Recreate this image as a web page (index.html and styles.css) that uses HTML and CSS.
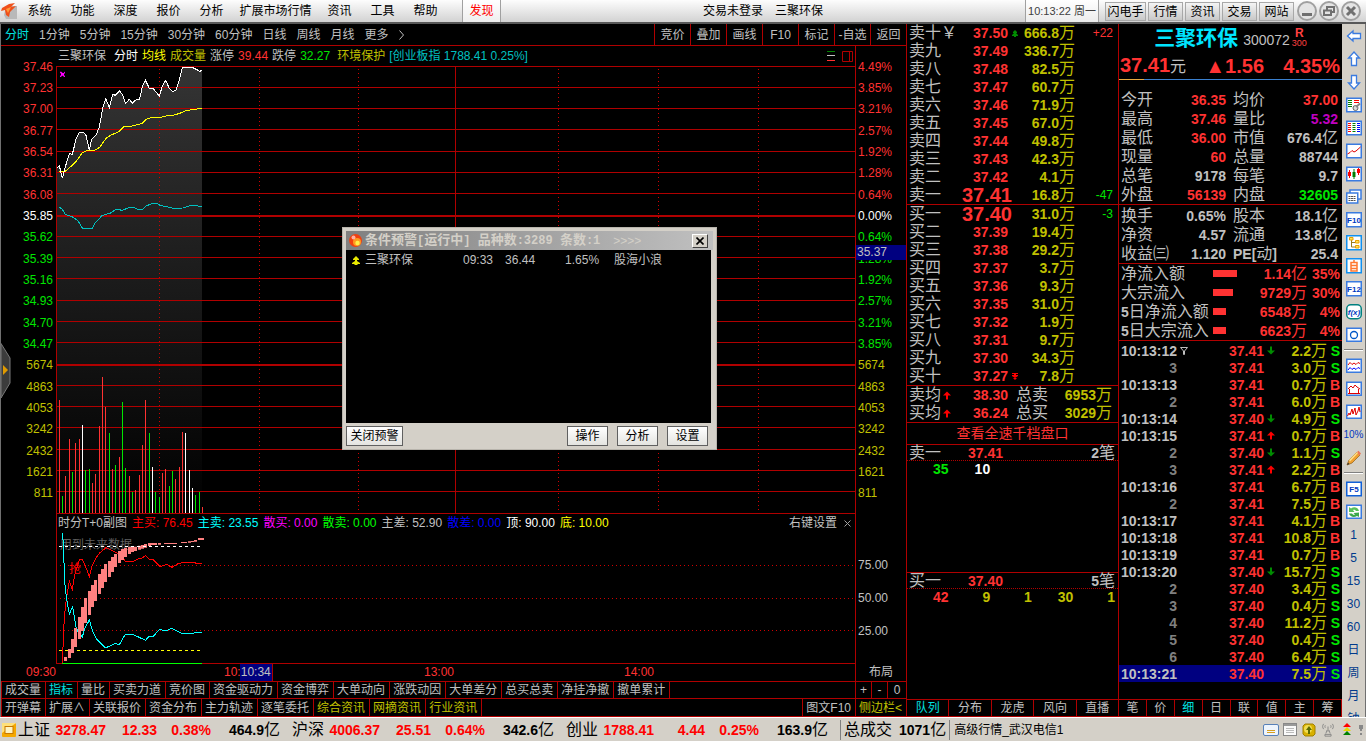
FILE: index.html
```html
<!DOCTYPE html>
<html lang="zh-CN">
<head>
<meta charset="utf-8">
<title>三聚环保 分时</title>
<link rel="stylesheet" href="styles.css">
</head>
<body>
<svg class="defs" width="0" height="0" aria-hidden="true">
  <symbol id="up" viewBox="0 0 8 8"><path d="M4 0L8 4H5V8H3V4H0Z"/></symbol>
  <symbol id="down" viewBox="0 0 8 8"><path d="M3 0H5V4H8L4 8L0 4H3Z"/></symbol>
  <symbol id="up2" viewBox="0 0 6 7"><path d="M3 0L5 2V3H1V2ZM3 2L6 5V6H4V7H2V6H0V5Z"/></symbol>
  <symbol id="down2" viewBox="0 0 6 7"><path d="M0 0H6V1H4V2H6V3L3 5L0 3V2H2V1H0ZM1 5H5L3 7Z"/></symbol>
</svg>

<header class="menubar">
  <svg class="logo" viewBox="0 0 16 16"><path d="M5 3H16V16H5L3 12Z" fill="#b9b9b9"/><path d="M1 5L8 1L14 0L10 4L15 3L9 9L8 14L5 12L4 7L0 8Z" fill="#f0501a"/><path d="M5 6L10 4L7 10Z" fill="#ff9a3c"/></svg>
  <nav class="menu">
    <button>系统</button><button>功能</button><button>深度</button><button>报价</button><button>分析</button><button class="wide">扩展市场行情</button><button>资讯</button><button>工具</button><button>帮助</button>
  </nav>
  <button class="discover">发现</button>
  <div class="title"><span>交易未登录</span><span>三聚环保</span></div>
  <div class="clock">10:13:22 周一</div>
  <div class="quick">
    <button>闪电手</button><button>行情</button><button>资讯</button><button>交易</button><button>网站</button>
  </div>
  <div class="winbtns">
    <button aria-label="最小化"><svg viewBox="0 0 20 20"><circle cx="10" cy="10" r="9"/><path class="m" d="M5 13.5H15" /></svg></button>
    <button aria-label="还原"><svg viewBox="0 0 20 20"><circle cx="10" cy="10" r="9"/><path class="n" d="M8 9V6H15V11H12M5 9.500H12V14H5Z"/></svg></button>
    <button aria-label="关闭"><svg viewBox="0 0 20 20"><circle cx="10" cy="10" r="9"/><path class="m" d="M6 6L14 14M14 6L6 14"/></svg></button>
  </div>
</header>

<main class="main">
  <section class="left">
    <div class="periods">
      <nav class="period-list">
        <button class="on">分时</button><button>1分钟</button><button>5分钟</button><button>15分钟</button><button>30分钟</button><button>60分钟</button><button>日线</button><button>周线</button><button>月线</button><button>更多</button><button aria-label="展开"><svg class="chev" viewBox="0 0 5 10"><path d="M.5 .5L4.500 5L.5 9.500"/></svg></button>
      </nav>
      <div class="tools">
        <button>竞价</button><button>叠加</button><button>画线</button><button>F10</button><button>标记</button><button>-自选</button><button>返回</button>
      </div>
    </div>

    <div class="info">
      <div class="legend">
        <span class="stock">三聚环保</span><span class="c-white">分时</span><span class="c-bright">均线</span><span class="c-yellow">成交量</span><span>涨停</span><span class="c-red">39.44</span><span>跌停</span><span class="c-green">32.27</span><span class="c-yellow sector">环境保护</span><span class="c-teal">[创业板指 1788.41 0.25%]</span>
      </div>
      <div class="chart-tools">
        <svg viewBox="0 0 8 10"><path d="M0 .5H8" stroke="#008000"/><path d="M0 4.500H8" stroke="#c0c0c0"/><path d="M0 9.500H8" stroke="#ff3232"/></svg>
        <svg class="split" viewBox="0 0 11 11"><path d="M.5 .5H10.500V10.500H.5ZM7.500 .5V10.500" stroke="#b00000"/></svg>
      </div>
      <div class="info-end"></div>
    </div>

    <div class="chart">
      <ol class="axis axis-left">
        <li>37.46</li><li>37.23</li><li>37.00</li><li>36.77</li><li>36.54</li><li>36.31</li><li>36.08</li><li class="c-white">35.85</li><li class="c-green">35.62</li><li class="c-green">35.39</li><li class="c-green">35.16</li><li class="c-green">34.93</li><li class="c-green">34.70</li><li class="c-green">34.47</li><li class="c-yellow">5674</li><li class="c-yellow">4863</li><li class="c-yellow">4053</li><li class="c-yellow">3242</li><li class="c-yellow">2432</li><li class="c-yellow">1621</li><li class="c-yellow">811</li>
      </ol>
      <svg class="plot" viewBox="168 48 2400 1344" preserveAspectRatio="none">
        <defs><linearGradient id="fade" x1="0" y1="0" x2="0" y2="1"><stop offset="0" stop-color="#343434"/><stop offset="1" stop-color="#000"/></linearGradient></defs>
        <path class="area" fill="url(#fade)" d="M170 355L178 347 187 385 194 357 208 311 217 313 228 268 238 247 250 247 258 256 268 300 275 268 288 255 298 232 308 175 317 146 328 172 338 133 346 136 359 122 368 136 377 160 388 148 397 160 406 151 419 147 427 109 436 90 448 115 460 116 478 138 487 109 497 91 508 115 518 125 528 120 538 89 547 52 577 52 600 64 606 60V1390H170Z"/>
        <path class="grid" d="M168 49.500H2568M168 112.500H2568M168 175.500H2568M168 238.500H2568M168 304.500H2568M168 367.500H2568M168 430.500H2568M168 559.500H2568M168 622.500H2568M168 685.500H2568M168 751.500H2568M168 814.500H2568M168 877.500H2568M168 1006.500H2568M168 1069.500H2568M168 1132.500H2568M168 1198.500H2568M168 1261.500H2568M168 1324.500H2568M168 1390.500H2568M169.500 48V1392M1366.500 48V1392M2566.500 48V1392"/>
        <path class="grid thick" d="M168 498H2568M168 945H2568"/>
        <path class="dots" d="M478.500 57V1389M778.500 57V1389M1075.500 57V1389M1675.500 57V1389M1975.500 57V1389M2275.500 57V1389"/>
        <path class="bar b-red" d="M178.500 1050V1389M196.500 1278V1389M208.500 1167V1389M226.500 1179V1389M238.500 1167V1389M277.500 1299V1389M286.500 1272V1389M298.500 1128V1389M307.500 981V1389M316.500 1070V1389M337.500 1257V1389M358.500 1220V1389M388.500 1278V1389M406.500 1320V1389M418.500 1275V1389M427.500 1185V1389M436.500 1050V1389M487.500 1269V1389M496.500 1257V1389M526.500 1287V1389M538.500 1250V1389M547.500 1146V1389M607.500 1371V1389"/>
        <path class="bar b-green" d="M187.500 1337V1389M217.500 1266V1389M256.500 1260V1389M268.500 1257V1389M328.500 1149V1389M346.500 1245V1389M367.500 1056V1389M376.500 1254V1389M397.500 1326V1389M448.500 1149V1389M466.500 1326V1389M478.500 1341V1389M508.500 1308V1389M517.500 1263V1389M586.500 1335V1389M598.500 1326V1389"/>
        <path class="bar b-white" d="M247.500 1125V1389M457.500 1250V1389M556.500 1149V1389M568.500 1260V1389M577.500 1314V1389"/>
        <path class="line b-teal" d="M178 471L187 478 196 493 220 502 234 512 247 534 278 534 284 520 306 497 332 489 348 478 368 481 388 472 400 472 414 478 428 478 440 467 460 460 470 460 480 466 500 470 520 475 548 474 575 466 605 469"/>
        <path class="line b-yellow" d="M178 364L196 364 208 353 218 345 228 335 247 308 262 301 284 301 300 291 318 265 332 256 358 244 372 230 392 229 425 221 440 207 456 202 482 202 497 198 520 196 548 187 556 182 605 175"/>
        <path class="line b-white" d="M170 355L178 347 187 385 194 357 208 311 217 313 228 268 238 247 250 247 258 256 268 300 275 268 288 255 298 232 308 175 317 146 328 172 338 133 346 136 359 122 368 136 377 160 388 148 397 160 406 151 419 147 427 109 436 90 448 115 460 116 478 138 487 109 497 91 508 115 518 125 528 120 538 89 547 52 577 52 600 64 606 60"/>
        <path fill="#f0f" d="M180 65H184L188 69H191L194 65H195V69L192 72V75L195 79V81H192L189 77H186L183 81H180V78L183 75V71L180 68Z"/>
      </svg>
      <ol class="axis axis-right">
        <li>4.49%</li><li>3.85%</li><li>3.21%</li><li>2.57%</li><li>1.92%</li><li>1.28%</li><li>0.64%</li><li class="c-white">0.00%</li><li class="c-green">0.64%</li><li class="c-green">1.28%</li><li class="c-green">1.92%</li><li class="c-green">2.57%</li><li class="c-green">3.21%</li><li class="c-green">3.85%</li><li class="c-yellow">5674</li><li class="c-yellow">4863</li><li class="c-yellow">4053</li><li class="c-yellow">3242</li><li class="c-yellow">2432</li><li class="c-yellow">1621</li><li class="c-yellow">811</li>
      </ol>
      <span class="cursor-price">35.37</span>
    </div>

    <div class="subhead">
      <div class="sublegend">
        <span>时分T+0副图</span><span class="s-red">主买: 76.45</span><span class="s-cyan">主卖: 23.55</span><span class="s-mag">散买: 0.00</span><span class="s-green">散卖: 0.00</span><span>主差: 52.90</span><span class="s-blue">散差: 0.00</span><span class="c-white">顶: 90.00</span><span class="c-bright">底: 10.00</span>
        <span class="rset">右键设置</span><button class="subclose" aria-label="关闭副图"><svg viewBox="0 0 7 7"><path d="M.5 .5L6.500 6.500M6.500 .5L.5 6.500"/></svg></button>
      </div>
      <div class="info-end"></div>
    </div>

    <div class="subchart">
      <div class="subleft"></div>
      <div class="subplot">
        <span class="hint">用到未来数据</span>
        <span class="grab">抢</span>
        <svg class="plot" viewBox="168 63 2400 399" preserveAspectRatio="none">
          <path class="dots" d="M180 166.500H2566M180 265.500H2566M180 361.500H2566"/>
          <path class="grid" d="M168 460.500H2568M169.500 63V462M2566.500 63V462"/>
          <path class="line s-dash b-yellow" d="M178 421.500H600"/>
          <path class="line b-red2" d="M188 460L190 370 196 290 202 250 208 213 217 238 226 185 238 150 247 148 256 168 268 199 276 168 288 144 300 128 318 113 330 119 350 129 364 138 376 154 400 154 412 148 428 143 437 136 447 147 458 147 480 170 500 163 516 172 536 160 560 157 580 157 590 160 606 160"/>
          <path class="line b-cyan" d="M187 70L190 100 194 215 199 262 208 312 218 290 228 350 236 370 247 380 256 352 268 330 278 364 290 387 316 414 334 406 346 400 358 404 375 374 400 374 437 391 446 380 460 379 478 358 496 363 516 355 545 370 580 370 590 367 606 367"/>
          <path fill="#ff8080" d="M192 441h9v12h-9zM204 417h9v27h-9zM213 387h9v42h-9zM222 354h9v57h-9zM234 321h9v66h-9zM243 291h9v72h-9zM252 264h9v75h-9zM264 243h9v72h-9zM273 225h9v66h-9zM282 210h9v63h-9zM294 192h9v60h-9zM303 177h9v57h-9zM312 162h9v54h-9zM324 153h9v48h-9zM333 141h9v45h-9zM342 132h9v39h-9zM354 123h9v36h-9zM363 117h9v33h-9zM372 114h9v27h-9zM384 111h9v21h-9zM393 110h9v16h-9zM402 110h9v13h-9zM414 107h9v12h-9zM423 105h9v11h-9zM432 102h9v11h-9zM444 99h9v9h-9zM453 99h18v6h-18zM474 99h9v5h-9zM492 99h39v3h-39zM543 96h18v3h-18zM564 94h9v4h-9zM573 93h9v3h-9zM582 90h9v5h-9zM594 84h18v6h-18z"/>
          <path class="line s-dash b-white" d="M178 109.500H600"/>
          <path class="line b-lime" d="M187 460.500H606"/>
        </svg>
      </div>
      <ol class="subaxis"><li>75.00</li><li>50.00</li><li>25.00</li></ol>
    </div>

    <div class="timeaxis">
      <span class="t-start">09:30</span>
      <div class="t-plot"><span class="t-first">10:30</span><span>13:00</span><span>14:00</span><b class="cursor-time">10:34</b></div>
      <button class="layout">布局</button>
    </div>

    <div class="tabs">
      <button>成交量</button><button class="on">指标</button><button>量比</button><button>买卖力道</button><button>竞价图</button><button>资金驱动力</button><button>资金博弈</button><button>大单动向</button><button>涨跌动因</button><button>大单差分</button><button>总买总卖</button><button>净挂净撤</button><button>撤单累计</button>
      <div class="zoomer"><button>+</button><button>-</button><button>0</button></div>
    </div>
    <div class="tabs tabs2">
      <button>开弹幕</button><button>扩展∧</button><button>关联报价</button><button>资金分布</button><button>主力轨迹</button><button>逐笔委托</button><button class="y">综合资讯</button><button class="y">网摘资讯</button><button class="y">行业资讯</button>
      <div class="tabend"><button>图文F10</button><button class="y">侧边栏&lt;</button></div>
    </div>

    <button class="flyout" aria-label="展开左侧栏"><svg viewBox="0 0 10 56"><path d="M0 .5L9 15V40L0 55Z" fill="#3c3c3c" stroke="#787878"/><path d="M2 22L7 27L2 32Z" fill="#e09a00"/></svg></button>
  </section>

  <section class="book">
    <table class="levels">
      <colgroup><col class="k1"><col class="k2"><col class="k3"><col class="k4"><col></colgroup>
      <tbody>
      <tr><th>卖十￥</th><td>37.50</td><td class="ar"><svg class="g"><use href="#up2"/></svg></td><td class="v">666.8<i>万</i></td><td class="d c-red">+22</td></tr>
      <tr><th>卖九</th><td>37.49</td><td></td><td class="v">336.7<i>万</i></td><td></td></tr>
      <tr><th>卖八</th><td>37.48</td><td></td><td class="v">82.5<i>万</i></td><td></td></tr>
      <tr><th>卖七</th><td>37.47</td><td></td><td class="v">60.7<i>万</i></td><td></td></tr>
      <tr><th>卖六</th><td>37.46</td><td></td><td class="v">71.9<i>万</i></td><td></td></tr>
      <tr><th>卖五</th><td>37.45</td><td></td><td class="v">67.0<i>万</i></td><td></td></tr>
      <tr><th>卖四</th><td>37.44</td><td></td><td class="v">49.8<i>万</i></td><td></td></tr>
      <tr><th>卖三</th><td>37.43</td><td></td><td class="v">42.3<i>万</i></td><td></td></tr>
      <tr><th>卖二</th><td>37.42</td><td></td><td class="v">4.1<i>万</i></td><td></td></tr>
      <tr><th>卖一</th><td class="big" colspan="2">37.41</td><td class="v">16.8<i>万</i></td><td class="d c-green">-47</td></tr>
      </tbody>
    </table>
    <table class="levels">
      <colgroup><col class="k1"><col class="k2"><col class="k3"><col class="k4"><col></colgroup>
      <tbody>
      <tr><th>买一</th><td class="big" colspan="2">37.40</td><td class="v">31.0<i>万</i></td><td class="d c-green">-3</td></tr>
      <tr><th>买二</th><td>37.39</td><td></td><td class="v">19.4<i>万</i></td><td></td></tr>
      <tr><th>买三</th><td>37.38</td><td></td><td class="v">29.2<i>万</i></td><td></td></tr>
      <tr><th>买四</th><td>37.37</td><td></td><td class="v">3.7<i>万</i></td><td></td></tr>
      <tr><th>买五</th><td>37.36</td><td></td><td class="v">9.3<i>万</i></td><td></td></tr>
      <tr><th>买六</th><td>37.35</td><td></td><td class="v">31.0<i>万</i></td><td></td></tr>
      <tr><th>买七</th><td>37.32</td><td></td><td class="v">1.9<i>万</i></td><td></td></tr>
      <tr><th>买八</th><td>37.31</td><td></td><td class="v">9.7<i>万</i></td><td></td></tr>
      <tr><th>买九</th><td>37.30</td><td></td><td class="v">34.3<i>万</i></td><td></td></tr>
      <tr><th>买十</th><td>37.27</td><td class="ar"><svg class="r"><use href="#down2"/></svg></td><td class="v">7.8<i>万</i></td><td></td></tr>
      </tbody>
    </table>
    <table class="levels">
      <colgroup><col class="k1"><col class="a2"><col class="a3"><col class="a4"><col></colgroup>
      <tbody>
      <tr><th>卖均</th><td class="al"><svg class="r"><use href="#up"/></svg></td><td>38.30</td><th class="tot">总卖</th><td class="v sum">6953<i>万</i></td></tr>
      <tr><th>买均</th><td class="al"><svg class="r"><use href="#up"/></svg></td><td>36.24</td><th class="tot">总买</th><td class="v sum">3029<i>万</i></td></tr>
      </tbody>
    </table>
    <a class="fulldepth" href="#depth">查看全速千档盘口</a>
    <div class="queue">
      <div class="qhead"><span class="ql">卖一</span><b>37.41</b><span class="qn"><b>2</b>笔</span></div>
      <div class="qrow"><span class="c-green">35</span><span class="c-white">10</span></div>
    </div>
    <div class="queue">
      <div class="qhead"><span class="ql">买一</span><b>37.40</b><span class="qn"><b>5</b>笔</span></div>
      <div class="qrow c-yellow"><span class="c-red">42</span><span>9</span><span>1</span><span>30</span><span>1</span></div>
    </div>
    <nav class="sidetabs"><button class="on">队列</button><button>分布</button><button>龙虎</button><button>风向</button><button>直播</button></nav>
  </section>

  <section class="quote">
    <div class="qname"><h1>三聚环保</h1><span class="code">300072</span><span class="flag"><b>R</b><span>300</span></span></div>
    <div class="qprice"><span class="last"><b>37.41</b>元</span><b class="chg">▲1.56</b><b class="pct">4.35%</b></div>
    <div class="rule"></div>
    <table class="stats first">
      <colgroup><col class="p1"><col class="p2"><col class="p3"><col></colgroup>
      <tbody>
      <tr><th>今开</th><td class="c-red">36.35</td><th>均价</th><td class="c-red">37.00</td></tr>
      <tr><th>最高</th><td class="c-red">37.46</td><th>量比</th><td class="c-mag">5.32</td></tr>
      <tr><th>最低</th><td class="c-red">36.00</td><th>市值</th><td>676.4<i>亿</i></td></tr>
      <tr><th>现量</th><td class="c-red">60</td><th>总量</th><td>88744</td></tr>
      <tr><th>总笔</th><td>9178</td><th>每笔</th><td>9.7</td></tr>
      <tr><th>外盘</th><td class="c-red">56139</td><th>内盘</th><td class="c-green">32605</td></tr>
      </tbody>
    </table>
    <table class="stats second">
      <colgroup><col class="p1"><col class="p2"><col class="p3"><col></colgroup>
      <tbody>
      <tr><th>换手</th><td>0.65%</td><th>股本</th><td>18.1<i>亿</i></td></tr>
      <tr><th>净资</th><td>4.57</td><th>流通</th><td>13.8<i>亿</i></td></tr>
      <tr><th>收益㈢</th><td>1.120</td><th><b>PE[</b>动<b>]</b></th><td>25.4</td></tr>
      </tbody>
    </table>
    <table class="stats flow">
      <colgroup><col class="f1"><col class="f2"><col class="f3"><col></colgroup>
      <tbody>
      <tr><th>净流入额</th><td class="barcell"><span class="fbar" style="width:24px"></span></td><td>1.14<i>亿</i></td><td>35%</td></tr>
      <tr><th>大宗流入</th><td class="barcell"><span class="fbar" style="width:20px"></span></td><td>9729<i>万</i></td><td>30%</td></tr>
      <tr><th><b>5</b>日净流入额</th><td class="barcell"><span class="fbar" style="width:13px"></span></td><td>6548<i>万</i></td><td>4%</td></tr>
      <tr><th><b>5</b>日大宗流入</th><td class="barcell"><span class="fbar" style="width:13px"></span></td><td>6623<i>万</i></td><td>4%</td></tr>
      </tbody>
    </table>
    <div class="tickbox">
    <table class="ticks">
      <colgroup><col class="t1"><col class="t2"><col class="t3"><col class="t4"><col class="t5"><col></colgroup>
      <tbody>
      <tr><td>10:13:12</td><td class="fl"><svg class="filter" viewBox="0 0 8 8"><path d="M.5 .5H7.500L4.500 4V7.500H3.500V4Z"/></svg></td><td>37.41</td><td class="ar"><svg class="g"><use href="#down"/></svg></td><td>2.2<i>万</i></td><td class="s">S</td></tr>
      <tr><td class="n">3</td><td></td><td>37.41</td><td></td><td>3.0<i>万</i></td><td class="s">S</td></tr>
      <tr><td>10:13:13</td><td></td><td>37.41</td><td></td><td>0.7<i>万</i></td><td>B</td></tr>
      <tr><td class="n">2</td><td></td><td>37.41</td><td></td><td>6.0<i>万</i></td><td>B</td></tr>
      <tr><td>10:13:14</td><td></td><td>37.40</td><td class="ar"><svg class="g"><use href="#down"/></svg></td><td>4.9<i>万</i></td><td class="s">S</td></tr>
      <tr><td>10:13:15</td><td></td><td>37.41</td><td class="ar"><svg class="r"><use href="#up"/></svg></td><td>0.7<i>万</i></td><td>B</td></tr>
      <tr><td class="n">2</td><td></td><td>37.40</td><td class="ar"><svg class="g"><use href="#down"/></svg></td><td>1.1<i>万</i></td><td class="s">S</td></tr>
      <tr><td class="n">3</td><td></td><td>37.41</td><td class="ar"><svg class="r"><use href="#up"/></svg></td><td>2.2<i>万</i></td><td>B</td></tr>
      <tr><td>10:13:16</td><td></td><td>37.41</td><td></td><td>6.7<i>万</i></td><td>B</td></tr>
      <tr><td class="n">2</td><td></td><td>37.41</td><td></td><td>7.5<i>万</i></td><td>B</td></tr>
      <tr><td>10:13:17</td><td></td><td>37.41</td><td></td><td>4.1<i>万</i></td><td>B</td></tr>
      <tr><td>10:13:18</td><td></td><td>37.41</td><td></td><td>10.8<i>万</i></td><td>B</td></tr>
      <tr><td>10:13:19</td><td></td><td>37.41</td><td></td><td>0.7<i>万</i></td><td>B</td></tr>
      <tr><td>10:13:20</td><td></td><td>37.40</td><td class="ar"><svg class="g"><use href="#down"/></svg></td><td>15.7<i>万</i></td><td class="s">S</td></tr>
      <tr><td class="n">2</td><td></td><td>37.40</td><td></td><td>3.4<i>万</i></td><td class="s">S</td></tr>
      <tr><td class="n">3</td><td></td><td>37.40</td><td></td><td>0.4<i>万</i></td><td class="s">S</td></tr>
      <tr><td class="n">4</td><td></td><td>37.40</td><td></td><td>11.2<i>万</i></td><td class="s">S</td></tr>
      <tr><td class="n">5</td><td></td><td>37.40</td><td></td><td>0.4<i>万</i></td><td class="s">S</td></tr>
      <tr><td class="n">6</td><td></td><td>37.40</td><td></td><td>6.4<i>万</i></td><td class="s">S</td></tr>
      <tr class="sel"><td>10:13:21</td><td></td><td>37.40</td><td></td><td>7.5<i>万</i></td><td class="s">S</td></tr>
      </tbody>
    </table>
    </div>
    <nav class="sidetabs"><button>笔</button><button>价</button><button class="on">细</button><button>日</button><button>联</button><button>值</button><button>主</button><button>筹</button></nav>
  </section>

  <aside class="rail">
    <button aria-label="后退"><svg viewBox="0 0 16 16"><path class="arrow" d="M1.500 8L7 3V5.500H14.500V10.500H7V13Z"/></svg></button>
    <button aria-label="上移"><svg viewBox="0 0 16 16"><path class="arrow" d="M8 1L13.500 7H10.500V14.500H5.500V7H2.500Z"/></svg></button>
    <button aria-label="下移"><svg viewBox="0 0 16 16"><path class="arrow" d="M8 15L13.500 9H10.500V1.500H5.500V9H2.500Z"/></svg></button>
    <button aria-label="报表设置"><svg viewBox="0 0 16 16"><rect class="box" x=".75" y="1.250" width="14.500" height="13.500"/><path d="M2 3.500H6M2 5.500H6M2 7.500H6M2 9.500H6" stroke="#008000"/><path d="M8 3.500H13M8 5.500H13" stroke="#f00"/><circle cx="9.500" cy="11" r="2.500" fill="#ddd" stroke="#666"/><path d="M10 10L14 6.500" stroke="#888" stroke-width="2"/></svg></button>
    <button aria-label="报表"><svg viewBox="0 0 16 16"><rect class="box" x=".75" y="1.250" width="14.500" height="13.500"/><path d="M2 3.500H5M2 5.500H5M2 7.500H5M2 9.500H5M2 11.500H5" stroke="#f00"/><path d="M6.500 3.500H9.500M6.500 5.500H9.500M6.500 7.500H9.500M6.500 9.500H9.500M6.500 11.500H9.500" stroke="#008000"/><path d="M11 3.500H14M11 5.500H14M11 7.500H14M11 9.500H14M11 11.500H14" stroke="#00f"/></svg></button>
    <button aria-label="走势"><svg viewBox="0 0 16 16"><rect class="box" x=".75" y="1.250" width="14.500" height="13.500"/><path d="M1.500 11L4 9.500L6 7.500L8 9L10 8L14.500 4" class="rl"/></svg></button>
    <button aria-label="K线"><svg viewBox="0 0 16 16"><rect class="box" x=".75" y="1.250" width="14.500" height="13.500"/><path d="M3.500 4V12M12.500 2V9" stroke="#f00"/><path d="M8 3V13" stroke="#008000"/><path d="M2 6H5V10H2ZM11 3H14V7H11Z" fill="#f00"/><path d="M6.500 6H9.500V11H6.500Z" fill="#008000"/></svg></button>
    <button aria-label="多窗"><svg viewBox="0 0 16 16"><rect class="box" x="4" y="1" width="11" height="9"/><rect class="box" x=".75" y="4" width="11" height="10"/><path d="M2.500 7.500H10M2.500 9.500H10M2.500 11.500H10" stroke="#555" stroke-dasharray="2 .5"/></svg></button>
    <button aria-label="F10"><svg viewBox="0 0 16 16"><rect class="box" x=".75" y=".75" width="14.500" height="14"/><text x="8" y="11" text-anchor="middle">F10</text></svg></button>
    <button aria-label="树形"><svg viewBox="0 0 16 16"><rect class="box cy" x=".75" y=".75" width="14.500" height="14"/><path d="M5.500 5V12H10M5.500 7.500H10" fill="none" stroke="#9a7a20"/><path d="M3.500 2.500H7V5H3.500ZM9.500 5.500H13V8H9.500ZM9.500 10.500H13V13H9.500Z" fill="#ffe35a" stroke="#e8a000"/></svg></button>
    <button aria-label="自选"><svg viewBox="0 0 16 16"><rect class="box cy" x=".75" y=".75" width="14.500" height="14"/><path d="M5 4.500H11V13H5ZM5 7.500H11M5 10.500H11M8 2V4" fill="none" stroke="#ff7830" stroke-width="1.500"/></svg></button>
    <button aria-label="F12"><svg viewBox="0 0 16 16"><rect class="box" x=".75" y=".75" width="14.500" height="14"/><text x="8" y="11" text-anchor="middle">F12</text></svg></button>
    <button aria-label="公式"><svg viewBox="0 0 16 16"><rect x=".75" y=".75" width="14.500" height="14" rx="4" fill="#fff" stroke="#008080" stroke-width="1.500"/><text x="8" y="11" text-anchor="middle" font-style="italic">f(x)</text></svg></button>
    <button aria-label="圆圈"><svg viewBox="0 0 16 16"><rect class="box" x=".75" y="1.250" width="14.500" height="13"/><circle cx="8" cy="8" r="3.500" fill="none" stroke="#0058c8" stroke-width="1.300"/></svg></button>
    <hr>
    <button aria-label="叠加走势"><svg viewBox="0 0 16 16"><rect class="box" x=".75" y="1.250" width="14.500" height="13"/><path d="M2 7L4 4.500L6 6.500L8 5L10 6.500L12 4.500L14 5.500" class="rl"/><path d="M2 12L4 9.500L6 11.500L8 10L10 11.500L12 9.500L14 10.500" fill="none" stroke="#00f"/></svg></button>
    <button aria-label="分时图"><svg viewBox="0 0 16 16"><rect class="box" x=".75" y="1.250" width="14.500" height="13"/><path d="M2 8L5 5L7 7L9 4L11 6L14 8M2 12.500H14M3.500 8V12M12.500 8V12" class="rl"/></svg></button>
    <button aria-label="波动图"><svg viewBox="0 0 16 16"><rect class="box" x=".75" y="1.250" width="14.500" height="13"/><path d="M1.500 12L3 9L4 11L6 5L7 10L9 4L10 11L12 7L13 3L14 8" class="rl"/></svg></button>
    <button class="txt pc">10%</button>
    <button aria-label="画笔"><svg viewBox="0 0 16 16"><path d="M1 15L3 10L11 2L14 5L6 13Z" fill="#f0a030" stroke="#9a6a20" stroke-width=".8"/><path d="M10.500 2.500L12.500 .8L15 3.500L13.500 5.500Z" fill="#e87858"/><path d="M1 15L2 12.500L3.500 14Z" fill="#333"/><path d="M3 10L11 2L12 3L4 11.500Z" fill="#ffe08a"/></svg></button>
    <hr>
    <button aria-label="F5"><svg viewBox="0 0 16 16"><rect x=".75" y="1.250" width="14.500" height="13.500" fill="#fff" stroke="#1060d8" stroke-width="1.500"/><text x="8" y="11" text-anchor="middle">F5</text></svg></button>
    <button aria-label="刷新"><svg viewBox="0 0 16 16"><rect class="box" x=".75" y="1.250" width="14.500" height="13"/><path d="M3 8V3L5 4.500C8 2 12 3 13 7H10C9 5.500 8 5.500 7 6L8.500 8Z" fill="#58c058"/><path d="M13 8.500V13L11 12C8 14 4 13 3 9.500H6C7 11 8 11 9 10.500L7.500 9Z" fill="#3ca84a"/></svg></button>
    <button class="txt">1</button><button class="txt">5</button><button class="txt">15</button><button class="txt">30</button><button class="txt">60</button><button class="txt">日</button><button class="txt">周</button><button class="txt">月</button><button class="txt">钟</button>
  </aside>

  <div class="dialog" role="dialog" aria-label="条件预警">
    <div class="dlg-title">
      <svg viewBox="0 0 13 13"><circle cx="6.500" cy="6.500" r="6.500" fill="#f04010"/><circle cx="8" cy="8" r="4" fill="#ff9a20"/><circle cx="8.500" cy="9" r="2.200" fill="#fff04a"/><circle cx="4.500" cy="3.500" r="2" fill="#ffb0a0"/></svg>
      <strong>条件预警<code>[</code>运行中<code>] </code>品种数<code>:3289 </code>条数<code>:1</code></strong><em>&gt;&gt;&gt;&gt;</em>
      <button class="dlg-x" aria-label="关闭"><svg viewBox="0 0 8 8"><path d="M.5 .5L7.500 7.500M7.500 .5L.5 7.500"/></svg></button>
    </div>
    <div class="dlg-body">
      <div class="alert"><svg viewBox="0 0 8 9"><path d="M4 0L7 3V4H5V5L8 7V8H5.500V9H2.500V8H0V7L3 5V4H1V3Z"/></svg><span class="an">三聚环保</span><span>09:33</span><span>36.44</span><span class="ap">1.65%</span><span class="af">股海小浪</span></div>
    </div>
    <div class="dlg-foot"><button class="shut">关闭预警</button><button>操作</button><button>分析</button><button>设置</button></div>
  </div>
</main>

<footer class="status">
  <svg class="st-icon" viewBox="0 0 14 14"><rect width="14" height="14" rx="1" fill="#f5a800"/><path d="M0 0H14L0 10Z" fill="#ffe07a"/><rect x="3" y="3.500" width="8" height="7" fill="#fff3c0" stroke="#c87800"/></svg>
  <div class="idx"><span>上证</span><b>3278.47</b><b>12.33</b><b>0.38%</b><span class="amt"><b>464.9</b>亿</span></div>
  <div class="idx"><span>沪深</span><b>4006.37</b><b>25.51</b><b>0.64%</b><span class="amt"><b>342.6</b>亿</span></div>
  <div class="idx"><span>创业</span><b>1788.41</b><b>4.44</b><b>0.25%</b><span class="amt"><b>163.9</b>亿</span></div>
  <div class="total"><span>总成交</span><span><b>1071</b>亿</span></div>
  <div class="server">高级行情_武汉电信1</div>
  <div class="tray">
    <svg viewBox="0 0 16 14"><rect x=".5" y="1.500" width="15" height="11" rx="1.500" fill="#eef4fc" stroke="#5880b8"/><path d="M4 7.500H12M4 9.500H12" stroke="#d8a020"/></svg>
    <svg viewBox="0 0 16 14"><rect x="1.500" y=".5" width="13" height="12" fill="#fafafa" stroke="#888"/><path d="M2 2H14" stroke="#999" stroke-width="2"/><path d="M4 5.500H12M4 7.500H12M4 9.500H12" stroke="#bbb"/></svg>
    <svg viewBox="0 0 16 14"><path d="M4 1H12L14 3V11L12 13H4L2 11V3Z" fill="#d8b000" stroke="#a08000"/><circle cx="7" cy="6" r="4" fill="#f0dc50"/><path d="M8 3L11 7H9V11H7V7H5Z" fill="#5a6a00"/></svg>
    <svg viewBox="0 0 16 16"><path d="M3 1C1.500 3 1.500 5 3 7M13 1C14.500 3 14.500 5 13 7M5 2.500C4.300 3.500 4.300 4.500 5 5.500M11 2.500C11.700 3.500 11.700 4.500 11 5.500M8 4V10M7 8L5.500 12M9 8L10.500 12M4.500 13H11.500V15H4.500Z" fill="none" stroke="#808080"/></svg>
    <svg viewBox="0 0 16 14"><path d="M8 0L12 4H4Z" fill="#f00"/><path d="M8 4L12 8H4Z" fill="#e8d800"/><path d="M8 8L12 12H4Z" fill="#008000"/></svg>
    <svg class="pin" viewBox="0 0 6 14"><path d="M1 2H5V6H4V8H2V6H1ZM2 10H4V12H2Z" fill="#888"/></svg>
  </div>
</footer>
</body>
</html>
```
FILE: styles.css
```css
* { box-sizing: border-box; }
html, body { height: 100%; margin: 0; }
body {
  display: flex;
  flex-direction: column;
  overflow: hidden;
  background: #000;
  color: #c0c0c0;
  font: 12px/16px "Liberation Sans", "Noto Sans CJK SC", sans-serif;
}
.defs { position: absolute; }
button {
  margin: 0;
  padding: 0;
  border: 0;
  background: none;
  color: inherit;
  font: inherit;
  white-space: nowrap;
}
svg { display: block; }
ol { margin: 0; padding: 0; list-style: none; }
i { font-style: normal; }

.c-white { color: #fff; }
.c-red { color: #ff3232; }
.c-green { color: #00e600; }
.c-yellow { color: #c0c000; }
.c-bright { color: #ffff00; }
.c-teal { color: #00c0c0; }
.c-mag { color: #c000c0; }

/* menu bar */
.menubar {
  display: flex;
  flex: none;
  height: 24px;
  align-items: stretch;
  background: linear-gradient(#fdfdfd, #d2d2d2);
  border-bottom: 2px solid #585858;
  color: #000;
}
.logo { width: 16px; height: 16px; margin: 3px 1px 0; }
.menu { display: flex; }
.menu button { width: 43px; }
.menu .wide { width: 85px; }
.discover {
  width: 39px;
  margin-left: 15px;
  border: solid #a0a0a0;
  border-width: 0 1px;
  background: linear-gradient(#fff, #eee);
  color: #f00;
}
.title { display: flex; flex: 1; gap: 12px; align-items: center; justify-content: center; }
.clock {
  flex: none;
  width: 74px;
  border: solid #a0a0a0;
  border-width: 0 1px;
  background: linear-gradient(#fff, #ececec);
  color: #404040;
  font-size: 11px;
  line-height: 22px;
  text-align: center;
  white-space: nowrap;
}
.quick { display: flex; gap: 2px; padding: 2px 2px 1px 6px; }
.quick button {
  width: 35px;
  border: 1px solid #a8a8a8;
  background: linear-gradient(#f4f4f4, #c8c8c8);
}
.quick button:first-child { width: 41px; }
.winbtns { display: flex; gap: 2px; padding: 1px 5px 1px 1px; }
.winbtns svg { width: 20px; height: 20px; }
.winbtns circle { fill: #e4e4e4; stroke: #a0a0a0; stroke-width: 2; }
.winbtns path { fill: none; stroke: #707070; stroke-width: 2; }
.winbtns .m { stroke-width: 3; }

/* page columns */
.main { position: relative; display: flex; flex: 1; min-height: 0; }
.left {
  position: relative;
  display: flex;
  flex: 1;
  min-width: 0;
  flex-direction: column;
  border-right: 1px solid #b00000;
  border-left: 1px solid #707070;
}
.periods { display: flex; flex: none; height: 22px; justify-content: space-between; border-bottom: 1px solid #b00000; }
.period-list { display: flex; gap: 10px; padding-left: 4px; }
.on { color: #00e0e0; }
.chev { width: 5px; height: 10px; fill: none; stroke: #c0c0c0; }
.tools { display: flex; }
.tools button { width: 36px; border-left: 1px solid #b00000; }

.info { display: flex; flex: none; height: 20px; line-height: 20px; padding-left: 57px; }
.legend { display: flex; flex: 1; gap: 4px; white-space: nowrap; }
.stock { margin-right: 4px; }
.sector { margin-left: 3px; }
.chart-tools { display: flex; gap: 7px; align-items: center; padding-right: 2px; fill: none; }
.chart-tools svg { width: 8px; height: 10px; }
.chart-tools .split { width: 11px; height: 11px; }
.info-end { width: 51px; border-left: 1px solid #b00000; }

.chart { position: relative; display: flex; flex: 448 1 0; min-height: 0; }
.plot { flex: 1; min-width: 0; width: 100%; height: 100%; overflow: visible; }
.axis { display: grid; grid-template-rows: repeat(21, 1fr); margin: -10px 0 10px; color: #ff3232; }
.axis li { display: flex; align-items: center; }
.axis-left { width: 55px; }
.axis-left li { justify-content: flex-end; padding-right: 3px; }
.axis-right { width: 50px; padding-left: 2px; }
.axis .c-white { color: #fff; }
.axis .c-green { color: #00e600; }
.axis .c-yellow { color: #c0c000; }
.cursor-price {
  position: absolute;
  top: 40%;
  right: 0;
  width: 50px;
  padding-left: 1px;
  background: #000080;
  line-height: 15px;
}
.plot path { vector-effect: non-scaling-stroke; }
.grid { fill: none; stroke: #b00000; stroke-width: 1px; shape-rendering: crispEdges; }
.thick { stroke-width: 2px; }
.dots { fill: none; stroke: #d00000; stroke-width: 1px; stroke-dasharray: 1 3; }
.bar, .line { fill: none; stroke-width: 1px; shape-rendering: crispEdges; }
.s-dash { stroke-dasharray: 3 3; }
.b-red { stroke: #ff3232; }
.b-red2 { stroke: #f00; }
.b-green { stroke: #00e600; }
.b-lime { stroke: #0f0; }
.b-white { stroke: #fff; }
.b-teal { stroke: #00c0c0; }
.b-cyan { stroke: #0ff; }
.b-yellow { stroke: #ff0; }

.subhead { display: flex; flex: none; height: 17px; line-height: 18px; padding-left: 55px; }
.sublegend { display: flex; flex: 1; gap: 5px; padding-left: 1px; border-left: 1px solid #b00000; white-space: nowrap; }
.rset { margin-left: auto; }
.subclose { padding: 2px 4px 0 2px; }
.subclose svg { width: 7px; height: 7px; stroke: #a0a0a0; }
.s-red { color: #f00; }
.s-cyan { color: #0ff; }
.s-mag { color: #f0f; }
.s-green { color: #0f0; }
.s-blue { color: #00f; }

.subchart { display: flex; flex: 133 1 0; min-height: 0; }
.subleft { width: 55px; }
.subplot { position: relative; flex: 1; min-width: 0; }
.hint, .grab { position: absolute; top: 6px; left: 4px; color: #606060; }
.grab { top: 30px; left: 13px; color: #f00; }
.subplot .plot { position: relative; }
.subaxis { display: grid; width: 50px; grid-template-rows: repeat(3, 1fr); padding: 18px 0 17px 2px; }
.subaxis li { display: flex; align-items: center; }

.timeaxis { display: flex; flex: none; height: 18px; border-bottom: 1px solid #b00000; color: #ff3232; line-height: 17px; }
.t-start { width: 55px; text-align: right; }
.t-plot { position: relative; display: grid; flex: 1; grid-template-columns: 83fr 200fr 200fr 200fr 116fr; text-align: center; }
.t-first { grid-column: 2; }
.cursor-time {
  position: absolute;
  left: 23%;
  width: 33px;
  border-right: 1px solid #b00000;
  background: #000080;
  color: #c0c0c0;
  font-weight: normal;
}
.layout { width: 51px; border-left: 1px solid #b00000; color: #c0c0c0; }

.tabs { display: flex; flex: none; height: 17px; border-bottom: 1px solid #b00000; border-left: 1px solid #b00000; line-height: 16px; }
.tabs2 { height: 18px; }
.tabs button { padding: 0 4px 0 3px; border-right: 1px solid #b00000; }
.tabs .y { color: #c0c000; }
.zoomer, .tabend { display: flex; margin-left: auto; border-left: 1px solid #b00000; }
.tabs .zoomer button { width: 16px; padding: 0; }
.zoomer button:last-child, .tabend button:last-child { border-right: 0; }
.tabs .zoomer button:last-child { width: 18px; }

.flyout { position: absolute; top: 46%; left: 0; }
.flyout svg { width: 10px; height: 56px; }

/* order book */
.book { display: flex; flex: none; width: 212px; flex-direction: column; border-right: 1px solid #b00000; }
table { width: 100%; border-collapse: separate; border-spacing: 0; table-layout: fixed; }
th, td { padding: 0; white-space: nowrap; line-height: 16px; }
th { color: #c0c0c0; font-size: 16px; font-weight: normal; text-align: left; }
th b { font-size: 14px; }
td { font-size: 14px; font-weight: bold; text-align: right; }
td i { font-size: 16px; font-weight: normal; }
.levels { flex: none; padding-left: 2px; border-bottom: 1px solid #b00000; color: #ff3232; }
.levels tr { height: 18px; }
.k1 { width: 34px; }
.k2 { width: 65px; }
.k3 { width: 14px; }
.k4 { width: 53px; }
.levels .v { color: #c0c000; }
.levels .d { padding-right: 5px; font-size: 12px; font-weight: normal; }
.levels .sum { padding-right: 6px; }
.levels .big { padding-right: 10px; font-size: 20px; }
.ar svg, .al svg { width: 8px; height: 9px; margin: 0 auto; }
.levels .ar svg { width: 6px; height: 7px; }
.g { fill: #008c00; }
.r { fill: #f00; }
.a2 { width: 8px; }
.a3 { width: 57px; }
.a4 { width: 42px; }
.tot { padding-left: 8px; }
.fulldepth {
  flex: none;
  height: 22px;
  border-bottom: 1px solid #b00000;
  color: #ff3232;
  font-size: 14px;
  line-height: 21px;
  text-align: center;
  text-decoration: none;
}
.queue { flex: 1; min-height: 0; }
.queue + .queue { border-top: 1px solid #b00000; }
.qhead { display: flex; height: 16px; padding: 0 3px 0 2px; border-bottom: 1px dotted #b00000; font-size: 16px; line-height: 16px; }
.qhead b { font-size: 14px; }
.ql { width: 59px; }
.qhead > b { flex: 1; color: #ff3232; }
.qrow { display: grid; grid-template-columns: repeat(5, 1fr); padding-right: 3px; font-size: 14px; font-weight: bold; text-align: right; }
.sidetabs { display: flex; flex: none; height: 18px; border: solid #b00000; border-width: 1px 0; }
.sidetabs button { flex: 1; border-right: 1px solid #b00000; }
.book .sidetabs button:last-child { border-right: 0; }

/* quote panel */
.quote { display: flex; flex: none; width: 223px; flex-direction: column; }
.qname { display: flex; flex: none; height: 28px; gap: 5px; align-items: center; justify-content: center; }
h1 { margin: 0; color: #00e5ff; font-size: 21px; font-weight: bold; line-height: 26px; }
.code { padding-top: 3px; font-size: 14px; }
.flag { display: flex; flex-direction: column; margin-left: -3px; color: #ff4040; font-size: 9px; line-height: 9px; }
.flag b { font-size: 12px; line-height: 11px; text-align: center; }
.qprice { display: flex; flex: none; height: 27px; align-items: center; justify-content: space-between; padding: 0 2px 0 1px; color: #ff3232; font-size: 20px; line-height: 24px; }
.last { color: #c0c0c0; font-size: 16px; }
.last b { color: #ff3232; font-size: 20px; }
.rule { flex: none; height: 1px; background: linear-gradient(90deg, #e8a840 25px, #3a80d0 25px); }
.stats { flex: none; padding: 0 4px 0 2px; border-bottom: 1px solid #b00000; }
.stats tr { height: 19px; }
.stats.first { padding-top: 10px; }
.stats.second { padding-top: 1px; }
.p1 { width: 50px; }
.p2 { width: 55px; }
.p3 { width: 52px; }
.first th:nth-child(3), .second th:nth-child(3) { padding-left: 7px; }
.stats.flow { padding-right: 2px; color: #ff3232; }
.f1 { width: 92px; }
.f2 { width: 24px; }
.f3 { width: 70px; }
.fbar { display: block; height: 7px; background: #ff3232; }
.tickbox { flex: 1; min-height: 0; overflow: hidden; padding-top: 1px; }
.ticks tr { height: 17px; }
.t1 { width: 58px; }
.t2 { width: 28px; }
.t3 { width: 59px; }
.t4 { width: 13px; }
.t5 { width: 50px; }
.ticks td:nth-child(3), .ticks td:nth-child(6) { color: #ff3232; }
.ticks td:nth-child(5) { color: #c0c000; }
.ticks td:last-child { padding-right: 2px; }
.ticks td.s { color: #00e600; }
.ticks .n { color: #808080; }
.fl { padding-left: 3px; }
.filter { width: 8px; height: 8px; fill: none; stroke: #c0c0c0; }
.sel { background: #000080; }

/* icon rail */
.rail { display: flex; flex: none; width: 24px; flex-direction: column; overflow: hidden; border-right: 1px solid #707070; background: #d4d0c8; }
.rail button { display: flex; flex: none; height: 23px; align-items: center; justify-content: center; }
.rail svg { width: 16px; height: 16px; fill: none; }
.rail hr { flex: none; width: 19px; height: 2px; margin: 3px auto; border: solid; border-width: 1px 0; border-color: #808080 #fff #fff #808080; }
.rail text { fill: #0038c0; font-size: 8px; font-weight: bold; }
.rail .box { fill: #fff; stroke: #3a7be0; stroke-width: 1.5; }
.rail .cy { stroke: #1090f0; }
.rail .arrow { fill: #fff; stroke: #3a7be0; stroke-width: 1.3; }
.rail .rl { stroke: #e00000; fill: none; }
.rail .txt { color: #003a8c; }
.rail .pc { color: #0038c0; font-size: 10px; }

/* alert dialog */
.dialog {
  position: absolute;
  top: 203px;
  left: 342px;
  width: 375px;
  padding: 3px;
  border: 1px solid;
  border-color: #fff #606060 #606060 #fff;
  outline: 1px solid #b8b4ac;
  outline-offset: -1px;
  background: #d4d0c8;
}
.dlg-title { display: flex; height: 19px; align-items: center; padding: 0 5px 0 3px; background: linear-gradient(90deg, #808080, #c0c0c0); color: #d4d0c8; font-size: 13px; }
.dlg-title > svg { width: 13px; height: 13px; margin-right: 3px; }
.dlg-title strong { white-space: pre; }
.dlg-title code { font: bold 12px/16px "Liberation Mono", monospace; }
.dlg-title em { margin-left: 13px; font-size: 12px; font-style: normal; }
.dlg-x { display: flex; width: 16px; height: 14px; margin-left: auto; align-items: center; justify-content: center; border: 1px solid; border-color: #fff #404040 #404040 #fff; background: #d4d0c8; }
.dlg-x svg { width: 8px; height: 8px; stroke: #000; stroke-width: 1.6; }
.dlg-body { height: 173px; margin-right: 2px; padding: 2px 6px; background: #000; }
.alert { display: flex; gap: 12px; align-items: center; }
.alert svg { width: 8px; height: 9px; margin-right: -7px; fill: #e8e800; }
.an { width: 86px; }
.ap { margin-left: 18px; }
.af { margin-left: 3px; }
.dlg-foot { display: flex; gap: 9px; padding: 3px 5px 0 0; color: #000; }
.dlg-foot button { width: 41px; height: 20px; border: 1px solid #606060; background: linear-gradient(#fff, #e4e4e0); }
.dlg-foot .shut { width: 57px; margin-right: auto; }

/* status bar */
.status { display: flex; flex: none; height: 24px; align-items: center; padding-left: 2px; border-top: 1px solid #fff; background: #d4d0c8; color: #000; font-size: 16px; line-height: 20px; white-space: nowrap; }
.status b { font-size: 14px; }
.st-icon { width: 14px; height: 14px; margin-right: 2px; }
.idx { display: grid; grid-template-columns: 36px 52px 51px 54px 69px; margin-right: 12px; text-align: right; }
.idx > span:first-child { text-align: left; }
.idx > b { color: #f00; }
.total { display: flex; gap: 7px; padding: 0 3px; border: solid #808080; border-width: 0 1px; }
.server { flex: 1; padding-left: 4px; font-size: 12px; }
.tray { display: flex; gap: 3px; align-items: center; padding-right: 2px; }
.tray svg { width: 16px; height: 14px; }
.tray .pin { width: 6px; }
```
